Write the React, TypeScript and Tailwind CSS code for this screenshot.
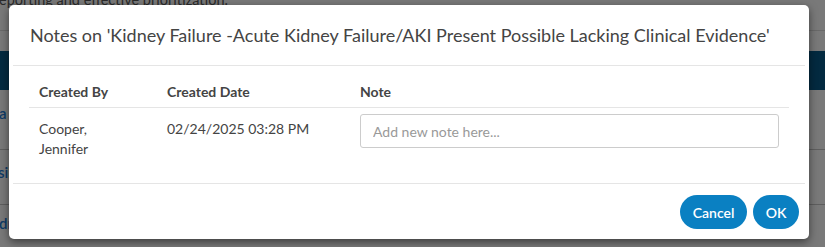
import React from "react";

export default function App() {
  const font = { fontFamily: "Lato, 'Noto Sans', sans-serif" };
  return (
    <div
      className="relative w-[825px] h-[247px] overflow-hidden bg-[#797979]"
      style={font}
    >
      {/* background page (dimmed) */}
      <div className="flex flex-col">
        <div className="h-[31px] relative border-b border-[#696969]">
          <div className="absolute left-[-1px] top-[-11px] text-[14.5px] text-[#2a2a2a] whitespace-nowrap">
            eporting and effective prioritization.
          </div>
        </div>
        <div className="h-[20px]" />
        <div className="h-[39px] bg-[#032a40]" />
        <div className="h-[59px] flex items-center text-[15px] text-[#0d3a66] font-semibold">
          <span className="-ml-[1px] mt-[-12px]">a</span>
        </div>
        <div className="h-[55px] border-t border-[#5e5e5e] flex items-center text-[15px] text-[#0d3a66] font-semibold">
          <span className="-ml-[2px] mt-[-10px]">sib</span>
        </div>
        <div className="h-[43px] border-t border-[#5e5e5e] flex items-center text-[15px] text-[#0d3a66] font-semibold">
          <span className="-ml-[1px] mt-[-6px]">dr</span>
        </div>
      </div>

      {/* modal */}
      <div className="absolute left-[9px] top-[5px] w-[800px] h-[234px] bg-white rounded-[5px] shadow-[0_3px_9px_rgba(0,0,0,0.5)] flex flex-col">
        <div className="h-[61px] mx-[4px] border-b border-[#e5e5e5] flex items-center pl-[17px]">
          <h2 className="text-[18px] text-[#444] leading-none whitespace-nowrap">
            Notes on 'Kidney Failure -Acute Kidney Failure/AKI Present Possible Lacking Clinical Evidence'
          </h2>
        </div>
        <div className="h-[117px] px-[20px] pt-[9px]">
          <div className="grid grid-cols-[128px_193px_1fr] text-[14px] text-[#444]">
            <div className="h-[33px] border-b border-[#e5e5e5] flex items-center px-[10px] font-bold">
              Created By
            </div>
            <div className="h-[33px] border-b border-[#e5e5e5] flex items-center px-[10px] font-bold">
              Created Date
            </div>
            <div className="h-[33px] border-b border-[#e5e5e5] flex items-center px-[10px] font-bold">
              Note
            </div>
            <div className="px-[10px] pt-[11px] leading-[20px]">
              Cooper,
              <br />
              Jennifer
            </div>
            <div className="px-[10px] pt-[11px] leading-[20px]">02/24/2025 03:28 PM</div>
            <div className="px-[10px] pt-[6px]">
              <input
                className="w-full h-[34px] border border-[#ccc] rounded-[3px] px-[12px] text-[14px] text-[#444] placeholder:text-[#999] outline-none"
                placeholder="Add new note here..."
                style={font}
              />
            </div>
          </div>
        </div>
        <div className="mx-[4px] border-t border-[#e5e5e5] flex-1 flex items-start justify-end gap-[6px] pt-[11px] pr-[6px]">
          <button className="h-[34px] w-[67px] rounded-full bg-[#0a80c2] text-white text-[14px] font-semibold">
            Cancel
          </button>
          <button className="h-[34px] w-[46px] rounded-full bg-[#0a80c2] text-white text-[14px] font-semibold">
            OK
          </button>
        </div>
      </div>
    </div>
  );
}
